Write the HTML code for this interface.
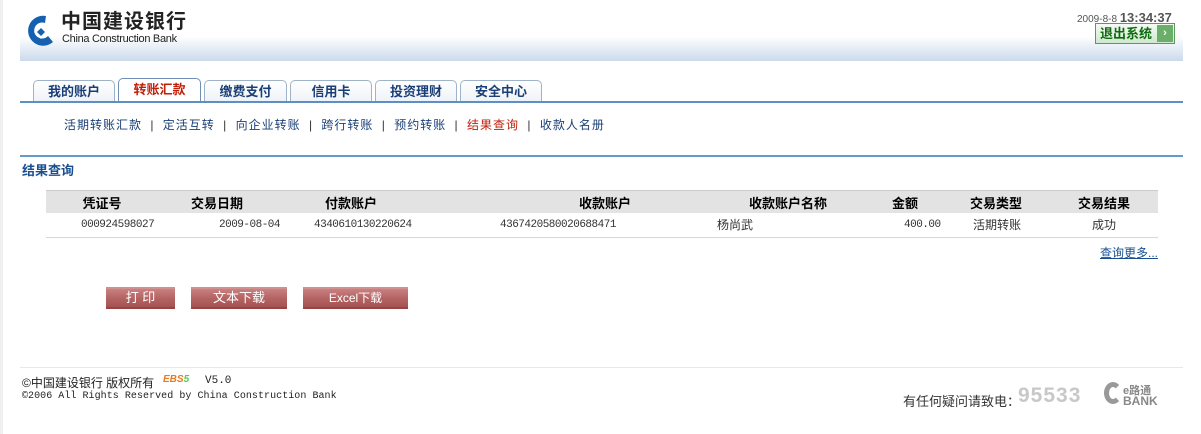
<!DOCTYPE html>
<html><head><meta charset="utf-8"><style>
*{margin:0;padding:0;box-sizing:border-box}
body{width:1201px;height:434px;background:#fff;position:relative;overflow:hidden;font-family:"Liberation Sans","Noto Sans CJK SC",sans-serif;font-size:12px;color:#333}
.a{position:absolute;white-space:nowrap}
.tab{position:absolute;top:80px;height:22px;border:1px solid #9fb3c8;border-bottom:none;border-radius:5px 5px 0 0;background:linear-gradient(#fff,#eef2f7);font-weight:bold;color:#1a3f77;font-size:13px;text-align:center;line-height:21px}
.th{position:absolute;top:193px;font-weight:bold;color:#000;font-size:13px;transform:translateX(-50%)}
.td{position:absolute;top:218px;line-height:14px;font-family:"Liberation Mono","Noto Sans CJK SC",monospace;font-size:11px;letter-spacing:-0.5px;color:#333}
.tc{position:absolute;top:218px;line-height:14px;font-family:"Noto Sans CJK SC",sans-serif;font-size:12px;color:#333}
.btn{position:absolute;top:287px;height:22px;background:linear-gradient(#c98080,#b56464 50%,#a65252);border-top:2px solid #d09090;border-bottom:2px solid #9a4343;color:#fff;text-align:center;line-height:18px;font-size:13px}
</style></head><body>
<div class="a" style="left:0;top:0;width:3px;height:434px;background:#f0f0f0"></div>
<div class="a" style="left:20px;top:36px;width:1163px;height:25px;background:linear-gradient(#fff,#cbdaeb)"></div>
<svg class="a" style="left:26px;top:13px" width="30" height="36" viewBox="0 0 30 36"><path d="M20 3 A15 15 0 1 0 27 29 L22 23 A8 8 0 1 1 19 10 Z" fill="#1560b0"/><path d="M15 12 L22 19 L15 26 L8 19 Z" fill="#fff"/><path d="M15 15 L19 19 L15 23 L11 19Z" fill="#1560b0"/></svg>
<div class="a" style="left:61px;top:11px;line-height:22px;font-size:20px;font-weight:bold;color:#222;letter-spacing:1px">中国建设银行</div>
<div class="a" style="left:62px;top:34px;line-height:11px;font-size:11px;color:#222;letter-spacing:-0.3px">China Construction Bank</div>
<div class="a" style="left:1077px;top:10px;font-size:10px;color:#555">2009-8-8 <span style="font-size:13px;font-weight:bold;color:#555">13:34:37</span></div>
<div class="a" style="left:1095px;top:23px;width:80px;height:21px;border:1px solid #5a9a5a;background:linear-gradient(#f4fbf4,#cfe8cf);color:#0d6a0d;font-weight:bold;font-size:13px;line-height:19px;padding-left:4px">退出系统<span style="position:absolute;right:1px;top:1px;width:16px;height:17px;background:#6aae6a;color:#fff;font-size:11px;text-align:center;line-height:17px">›</span></div>
<div class="tab" style="left:33px;width:82px">我的账户</div>
<div class="tab" style="left:118px;width:83px;top:78px;height:24px;color:#c0200a;background:#fff;border-color:#6f90b4">转账汇款</div>
<div class="tab" style="left:204px;width:83px">缴费支付</div>
<div class="tab" style="left:290px;width:82px">信用卡</div>
<div class="tab" style="left:375px;width:82px">投资理财</div>
<div class="tab" style="left:460px;width:82px">安全中心</div>
<div class="a" style="left:20px;top:101px;width:1163px;height:2px;background:#5b8fc6"></div>
<div class="a" style="left:64px;top:116px;font-size:12px;color:#1a3f77;letter-spacing:1px;word-spacing:4px">活期转账汇款 <span style="color:#333">|</span> 定活互转 <span style="color:#333">|</span> 向企业转账 <span style="color:#333">|</span> 跨行转账 <span style="color:#333">|</span> 预约转账 <span style="color:#333">|</span> <span style="color:#c0200a">结果查询</span> <span style="color:#333">|</span> 收款人名册</div>
<div class="a" style="left:20px;top:155px;width:1163px;height:2px;background:#6699cc"></div>
<div class="a" style="left:22px;top:160px;font-weight:bold;color:#1a4f8f;font-size:13px">结果查询</div>
<div class="a" style="left:46px;top:190px;width:1112px;height:23px;background:#e3e3e3;border-top:1px solid #ccc"></div>
<div class="a" style="left:46px;top:237px;width:1112px;height:1px;background:#d8d8d8"></div>
<div class="th" style="left:102px">凭证号</div>
<div class="th" style="left:217px">交易日期</div>
<div class="th" style="left:351px">付款账户</div>
<div class="th" style="left:605px">收款账户</div>
<div class="th" style="left:788px">收款账户名称</div>
<div class="th" style="left:905px">金额</div>
<div class="th" style="left:996px">交易类型</div>
<div class="th" style="left:1104px">交易结果</div>
<div class="td" style="left:81px">000924598027</div>
<div class="td" style="left:219px">2009-08-04</div>
<div class="td" style="left:314px">4340610130220624</div>
<div class="td" style="left:500px">4367420580020688471</div>
<div class="tc" style="left:717px">杨尚武</div>
<div class="td" style="left:904px">400.00</div>
<div class="tc" style="left:973px">活期转账</div>
<div class="tc" style="left:1092px">成功</div>
<div class="a" style="left:1100px;top:244px;color:#1a4f8f;text-decoration:underline;font-size:12px">查询更多...</div>
<div class="btn" style="left:106px;width:69px">打 印</div>
<div class="btn" style="left:191px;width:96px">文本下载</div>
<div class="btn" style="left:303px;width:105px;font-size:12px">Excel下载</div>
<div class="a" style="left:20px;top:367px;width:1163px;height:1px;background:#e8e8e8"></div>
<div class="a" style="left:22px;top:374px;font-size:12px;color:#222">©中国建设银行 版权所有</div>
<div class="a" style="left:163px;top:374px;font-size:10px;font-weight:bold;color:#e87a20;font-style:italic">EBS<span style="color:#5c5">5</span></div>
<div class="a" style="left:205px;top:375px;font-family:'Liberation Mono',monospace;font-size:11px;color:#222">V5.0</div>
<div class="a" style="left:22px;top:391px;font-family:'Liberation Mono',monospace;font-size:10px;color:#222;letter-spacing:0.05px">©2006 All Rights Reserved by China Construction Bank</div>
<div class="a" style="left:903px;top:391px;font-size:13px;color:#333">有任何疑问请致电：</div>
<div class="a" style="left:1018px;top:384px;font-size:21px;font-weight:bold;color:#c8c8c8;letter-spacing:1px">95533</div>
<div class="a" style="left:1104px;top:382px;width:18px;height:22px;border:5px solid #999;border-right-color:transparent;border-radius:50%"></div>
<div class="a" style="left:1123px;top:382px;font-size:11px;font-weight:bold;color:#888">e路通</div>
<div class="a" style="left:1123px;top:394px;font-size:12px;font-weight:bold;color:#888">BANK</div>
</body></html>
